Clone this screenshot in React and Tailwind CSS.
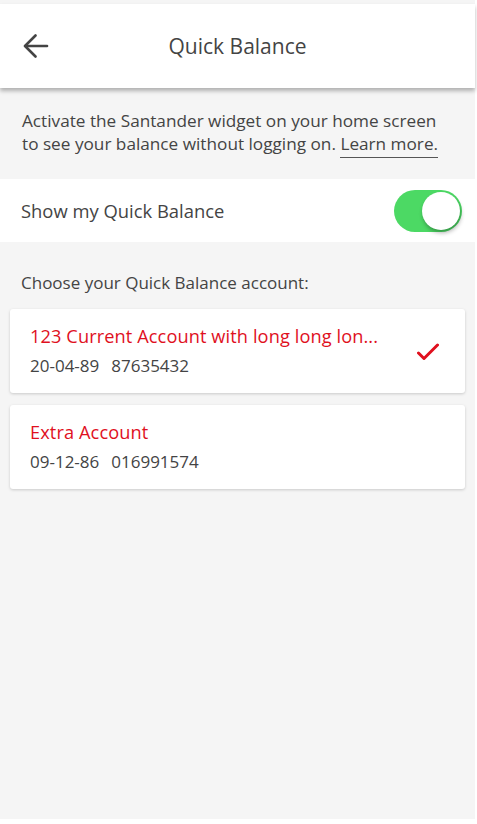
import { useState } from 'react';

const ACCOUNTS = [
    { id: 1, name: '123 Current Account with long long lon...', sort: '20-04-89', number: '87635432' },
    { id: 2, name: 'Extra Account', sort: '09-12-86', number: '016991574' },
];

export default function App() {
    const [enabled, setEnabled] = useState(true);
    const [selected, setSelected] = useState(1);

    return (
        <div className="w-[477px] h-[824px] bg-white" style={{ fontFamily: '"Open Sans", "Noto Sans", sans-serif' }}>
            <div className="w-[475px] h-[819px] bg-[#f5f5f5] pt-[4px] flex flex-col">
                {/* Header */}
                <div className="relative z-10 h-[84px] bg-white flex items-center shadow-[0_3px_4px_rgba(0,0,0,0.28)]">
                    <button className="w-[72px] h-full flex items-center pl-[23px]">
                        <svg width="26" height="24" viewBox="0 0 26 24" fill="none" stroke="#444" strokeWidth="2.6" strokeLinecap="round" strokeLinejoin="round">
                            <path d="M24 12H2.5" />
                            <path d="M12.5 1.5L2 12l10.5 10.5" />
                        </svg>
                    </button>
                    <h1 className="flex-1 text-center pr-[72px] text-[21px] text-[#444] leading-none">Quick Balance</h1>
                </div>

                {/* Info */}
                <p className="px-[22px] pt-[21px] pb-[24px] text-[17.2px] leading-[23px] text-[#444]">
                    Activate the Santander widget on your home screen to see your balance without logging on.{' '}
                    <a className="border-b-[1.5px] border-[#555] pb-[2px]">Learn more.</a>
                </p>

                {/* Toggle row */}
                <div className="h-[63px] bg-white flex items-center justify-between pl-[21px] pr-[13px]">
                    <span className="text-[18.4px] text-[#444]">Show my Quick Balance</span>
                    <button
                        onClick={() => setEnabled(!enabled)}
                        className={`relative w-[68px] h-[42px] rounded-full ${enabled ? 'bg-[#4cd964]' : 'bg-[#e5e5e5]'}`}
                    >
                        <span
                            className={`absolute top-[2px] w-[38px] h-[38px] rounded-full bg-white shadow-[1px_3px_4px_rgba(0,0,0,0.3)] ${enabled ? 'right-[2px]' : 'left-[2px]'}`}
                        />
                    </button>
                </div>

                <p className="px-[21px] pt-[29px] pb-[15px] text-[17px] leading-[23px] text-[#444]">Choose your Quick Balance account:</p>

                {/* Accounts */}
                <div className="flex flex-col gap-[12px] px-[10px]">
                    {ACCOUNTS.map((a) => (
                        <div
                            key={a.id}
                            onClick={() => setSelected(a.id)}
                            className="h-[84px] bg-white rounded-[3px] shadow-[0_1px_3px_rgba(0,0,0,0.18)] flex items-center pl-[20px] pr-[26px]"
                        >
                            <div className="flex-1 min-w-0">
                                <p className="text-[18.2px] leading-[30px] text-[#e0101e] whitespace-nowrap tracking-[0.1px]">{a.name}</p>
                                <p className="text-[17px] leading-[30px] text-[#444] flex gap-[12px]">
                                    <span>{a.sort}</span>
                                    <span>{a.number}</span>
                                </p>
                            </div>
                            {selected === a.id && (
                                <svg width="22" height="18" viewBox="0 0 22 18" fill="none" stroke="#e0101e" strokeWidth="3" strokeLinecap="round" strokeLinejoin="round" className="mt-[2px]">
                                    <path d="M1.5 10L7 15.5L20.5 2" />
                                </svg>
                            )}
                        </div>
                    ))}
                </div>
            </div>
        </div>
    );
}
